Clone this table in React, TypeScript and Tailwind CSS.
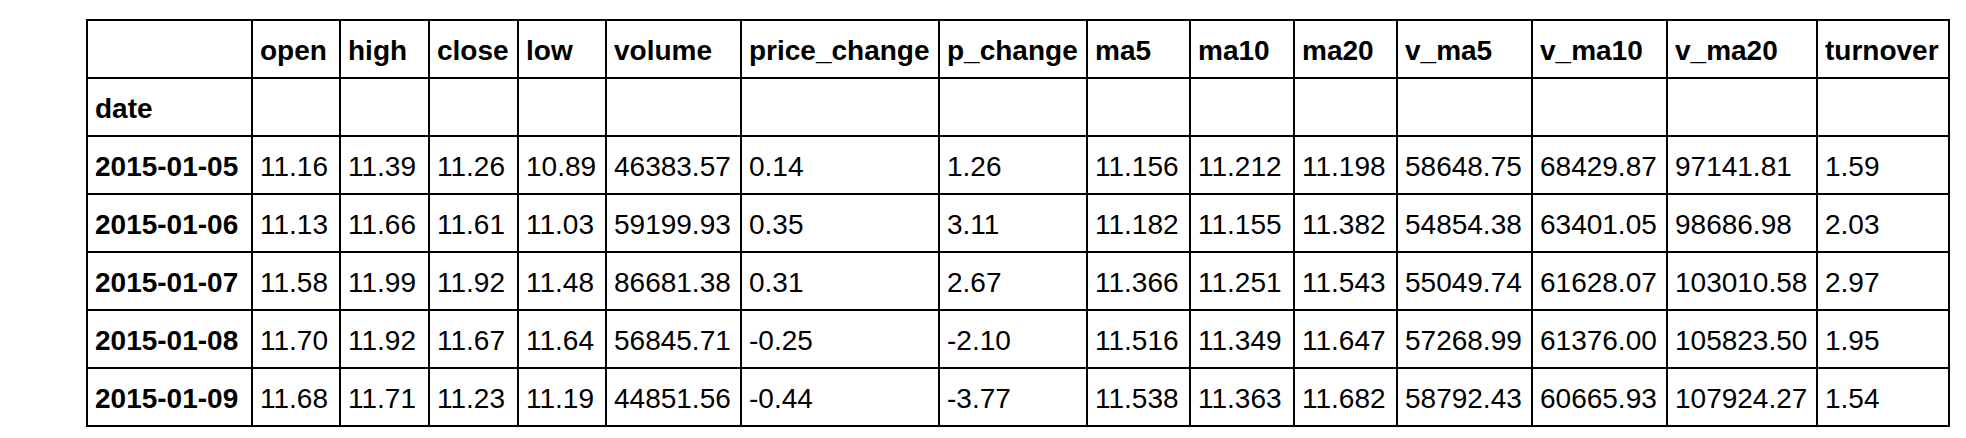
const columns = [
  "open",
  "high",
  "close",
  "low",
  "volume",
  "price_change",
  "p_change",
  "ma5",
  "ma10",
  "ma20",
  "v_ma5",
  "v_ma10",
  "v_ma20",
  "turnover",
];

const rows: [string, string[]][] = [
  ["2015-01-05", ["11.16", "11.39", "11.26", "10.89", "46383.57", "0.14", "1.26", "11.156", "11.212", "11.198", "58648.75", "68429.87", "97141.81", "1.59"]],
  ["2015-01-06", ["11.13", "11.66", "11.61", "11.03", "59199.93", "0.35", "3.11", "11.182", "11.155", "11.382", "54854.38", "63401.05", "98686.98", "2.03"]],
  ["2015-01-07", ["11.58", "11.99", "11.92", "11.48", "86681.38", "0.31", "2.67", "11.366", "11.251", "11.543", "55049.74", "61628.07", "103010.58", "2.97"]],
  ["2015-01-08", ["11.70", "11.92", "11.67", "11.64", "56845.71", "-0.25", "-2.10", "11.516", "11.349", "11.647", "57268.99", "61376.00", "105823.50", "1.95"]],
  ["2015-01-09", ["11.68", "11.71", "11.23", "11.19", "44851.56", "-0.44", "-3.77", "11.538", "11.363", "11.682", "58792.43", "60665.93", "107924.27", "1.54"]],
];

const cell = "border-2 border-black px-[7px] pt-[3px] h-[58px] text-left align-middle whitespace-nowrap";

export default function App() {
  return (
    <div className="min-h-[438px] w-full bg-white pt-[19px] pl-[86px] font-['Liberation_Sans',Arial,sans-serif] text-[28px] leading-none text-black">
      <table className="table-fixed border-collapse w-[1862px]">
        <colgroup>
          <col className="w-[165px]" />
          <col className="w-[88px]" />
          <col className="w-[89px]" />
          <col className="w-[89px]" />
          <col className="w-[88px]" />
          <col className="w-[135px]" />
          <col className="w-[198px]" />
          <col className="w-[148px]" />
          <col className="w-[103px]" />
          <col className="w-[104px]" />
          <col className="w-[103px]" />
          <col className="w-[135px]" />
          <col className="w-[135px]" />
          <col className="w-[150px]" />
          <col className="w-[132px]" />
        </colgroup>
        <thead>
          <tr>
            <th className={cell}></th>
            {columns.map((c) => (
              <th key={c} className={`${cell} font-bold`}>
                {c}
              </th>
            ))}
          </tr>
          <tr>
            <th className={`${cell} font-bold`}>date</th>
            {columns.map((c) => (
              <th key={c} className={cell}></th>
            ))}
          </tr>
        </thead>
        <tbody>
          {rows.map(([date, values]) => (
            <tr key={date}>
              <th className={`${cell} font-bold`}>{date}</th>
              {values.map((v, i) => (
                <td key={i} className={`${cell} font-normal`}>
                  {v}
                </td>
              ))}
            </tr>
          ))}
        </tbody>
      </table>
    </div>
  );
}
